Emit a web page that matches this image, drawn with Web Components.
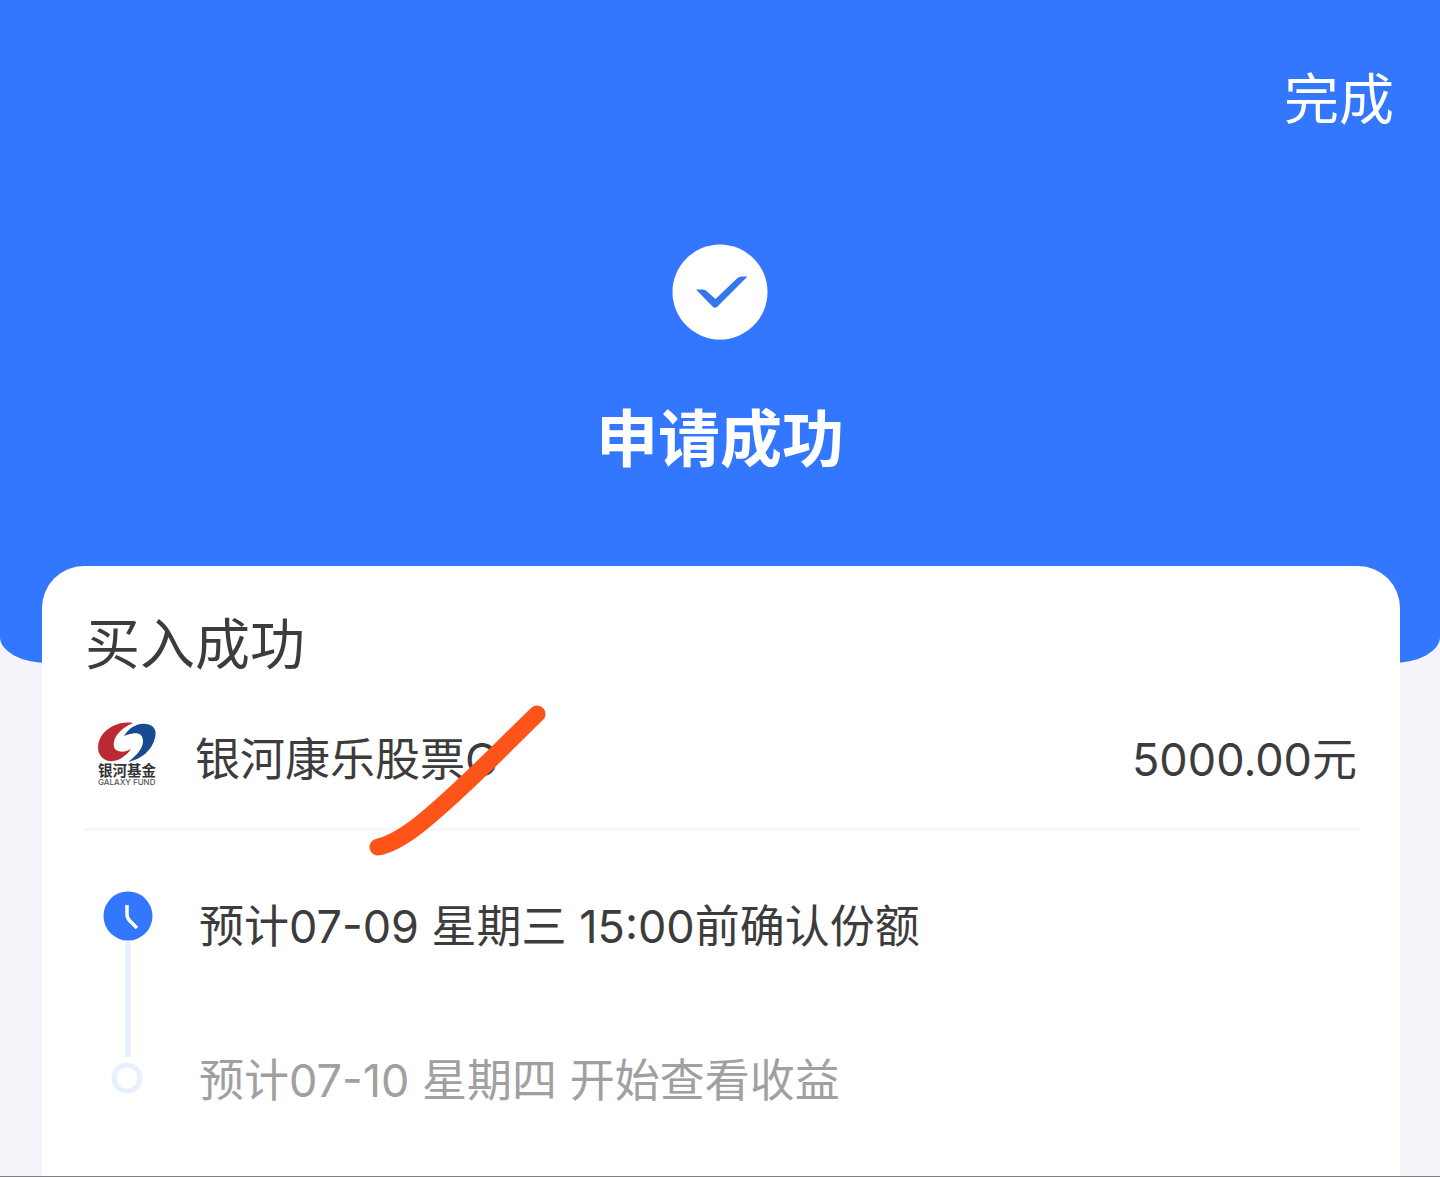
<!DOCTYPE html>
<html lang="zh-CN">
<head>
  <meta charset="utf-8">
  <meta name="viewport" content="width=device-width, initial-scale=1">
  <title>申请成功</title>
  <style>
    body {
      margin: 0;
      background: #f4f4fa;
      color: #3c3c3c;
      font-family: Inter, "Noto Sans CJK SC", sans-serif;
    }
  </style>
</head>
<body>
  <result-page>
    <result-header slot="header" heading="申请成功" action="完成"></result-header>
    <order-card heading="买入成功">
      <fund-row amount="5000.00元">银河康乐股票C</fund-row>
      <step-list>
        <step-item state="active">预计07-09 星期三 15:00前确认份额</step-item>
        <step-item state="pending">预计07-10 星期四 开始查看收益</step-item>
      </step-list>
    </order-card>
  </result-page>

  <script>
    class ResultPage extends HTMLElement {
      constructor() {
        super();
        this.attachShadow({ mode: "open" });
        this.shadowRoot.innerHTML = `
          <style>
            :host {
              display: flex;
              flex-direction: column;
              box-sizing: border-box;
              min-height: 100vh;
              border-bottom: 1px solid #7f7f82;
            }
            main {
              display: flex;
              flex: 1;
              margin: -97px 40px 0 42px;
            }
          </style>
          <slot name="header"></slot>
          <main><slot></slot></main>
        `;
      }
    }

    class ResultHeader extends HTMLElement {
      constructor() {
        super();
        this.attachShadow({ mode: "open" });
      }

      connectedCallback() {
        this.shadowRoot.innerHTML = `
          <style>
            :host {
              display: flex;
              flex-direction: column;
              align-items: center;
              padding: 65px 46px 183px;
              background: #3377ff;
              color: #fff;
              border-radius: 0 0 48px 48px / 0 0 26px 26px;
            }
            button {
              align-self: flex-end;
              padding: 0;
              border: 0;
              background: none;
              color: inherit;
              font: inherit;
              font-size: 55px;
              line-height: 68px;
              cursor: pointer;
            }
            svg {
              display: block;
              width: 96px;
              height: 96px;
              margin-top: 111px;
            }
            h1 {
              margin: 60px 0 0;
              font-size: 62px;
              line-height: 80px;
              font-weight: 700;
            }
          </style>
          <button type="button">${this.getAttribute("action")}</button>
          <svg viewBox="0 0 96 96" aria-hidden="true">
            <circle cx="48" cy="48" r="47.5" fill="#fff"/>
            <path d="M24 45.5H31Q33 45.5 34.5 47L43.5 55L65.5 34Q67.5 32.5 69.5 32.5H75.5L45.5 62.5Q43 65 40.5 62.5Z" fill="#3476ee"/>
          </svg>
          <h1>${this.getAttribute("heading")}</h1>
        `;
      }
    }

    class OrderCard extends HTMLElement {
      constructor() {
        super();
        this.attachShadow({ mode: "open" });
      }

      connectedCallback() {
        this.shadowRoot.innerHTML = `
          <style>
            :host {
              display: block;
              flex: 1;
              padding: 44px 40px 40px 43px;
              background: #fff;
              border-radius: 42px 42px 0 0;
            }
            h2 {
              margin: 0;
              font-size: 55px;
              line-height: 68px;
              font-weight: 400;
            }
          </style>
          <h2>${this.getAttribute("heading")}</h2>
          <slot></slot>
        `;
      }
    }

    class FundLogo extends HTMLElement {
      constructor() {
        super();
        this.attachShadow({ mode: "open" });
        this.shadowRoot.innerHTML = `
          <style>
            :host { display: block; width: 60px; height: 70px; }
            svg { display: block; width: 100%; height: 100%; }
            text { font-family: Inter, "Noto Sans CJK SC", sans-serif; }
          </style>
          <svg viewBox="0 0 60 70" role="img" aria-label="银河基金">
            <path d="M36 1C24 -1 12 4 5 13C-1 22 0 33 7 37C13 41 21 39 26 35C29 33 32 30 34 27C29 30 22 31 18 27C14 21 19 8 36 1Z" fill="#b92a33"/>
            <path d="M27 14C32 6 40 1 49 2C57 3 60 8 58 16C55 28 45 37 31 40C39 34 46 27 46 19C46 11 39 9 27 14Z" fill="#174a91"/>
            <text x="1" y="54" font-size="14.5" font-weight="700" fill="#333">银河基金</text>
            <text x="1" y="63" font-size="8" font-weight="500" fill="#555">GALAXY FUND</text>
          </svg>
        `;
      }
    }

    class FundRow extends HTMLElement {
      constructor() {
        super();
        this.attachShadow({ mode: "open" });
      }

      connectedCallback() {
        this.shadowRoot.innerHTML = `
          <style>
            :host {
              position: relative;
              display: flex;
              align-items: flex-start;
              padding: 44px 3px 33px 12px;
              border-bottom: 3px solid #f7f7f8;
              font-size: 45px;
              line-height: 70px;
            }
            .name, .amount { padding-top: 3px; }
            .name { flex: 1; margin-left: 38px; }
            /* pen stroke drawn over the fund name */
            .mark {
              position: absolute;
              left: 283px;
              top: 26px;
              width: 180px;
              height: 154px;
              pointer-events: none;
            }
          </style>
          <fund-logo></fund-logo>
          <span class="name"><slot></slot></span>
          <span class="amount">${this.getAttribute("amount")}</span>
          <svg class="mark" viewBox="0 0 180 154" aria-hidden="true">
            <path d="M10 143C32 139 59 115 82 94C113 66 138 40 169 10" fill="none" stroke="#ff5419" stroke-width="17" stroke-linecap="round"/>
          </svg>
        `;
      }
    }

    class StepList extends HTMLElement {
      constructor() {
        super();
        this.attachShadow({ mode: "open" });
        this.shadowRoot.innerHTML = `
          <style>
            :host { display: block; padding: 59px 0 0 17px; }
          </style>
          <div role="list"><slot></slot></div>
        `;
      }
    }

    class StepItem extends HTMLElement {
      constructor() {
        super();
        this.attachShadow({ mode: "open" });
      }

      connectedCallback() {
        const active = this.getAttribute("state") === "active";
        this.setAttribute("role", "listitem");
        this.shadowRoot.innerHTML = `
          <style>
            :host {
              display: flex;
              gap: 45px;
              font-size: 45px;
              line-height: 74px;
            }
            :host([state="active"]) { min-height: 154px; }
            :host([state="pending"]) { color: #a0a0a0; }
            .rail {
              display: flex;
              flex-direction: column;
              align-items: center;
              width: 52px;
            }
            .rail svg { display: block; flex: none; }
            .line { flex: 1; width: 6px; margin-bottom: -13px; background: #e9f1ff; }
            .pending { padding-top: 17px; }
          </style>
          <div class="rail ${active ? "" : "pending"}">
            ${active ? this.clock() : this.ring()}
          </div>
          <span><slot></slot></span>
        `;
      }

      clock() {
        return `
          <svg width="52" height="52" viewBox="0 0 52 52" aria-hidden="true">
            <circle cx="26" cy="26" r="24.5" fill="#3377ff"/>
            <path d="M25 15V24Q25 28 27.5 30.5L35 38" fill="none" stroke="#fff" stroke-width="3.5"/>
          </svg>
          <div class="line"></div>
        `;
      }

      ring() {
        return `
          <svg width="34" height="34" viewBox="0 0 34 34" aria-hidden="true">
            <circle cx="16" cy="17" r="13" fill="#fff" stroke="#e7f0fe" stroke-width="5"/>
          </svg>
        `;
      }
    }

    customElements.define("fund-logo", FundLogo);
    customElements.define("result-page", ResultPage);
    customElements.define("result-header", ResultHeader);
    customElements.define("order-card", OrderCard);
    customElements.define("fund-row", FundRow);
    customElements.define("step-list", StepList);
    customElements.define("step-item", StepItem);
  </script>
</body>
</html>
